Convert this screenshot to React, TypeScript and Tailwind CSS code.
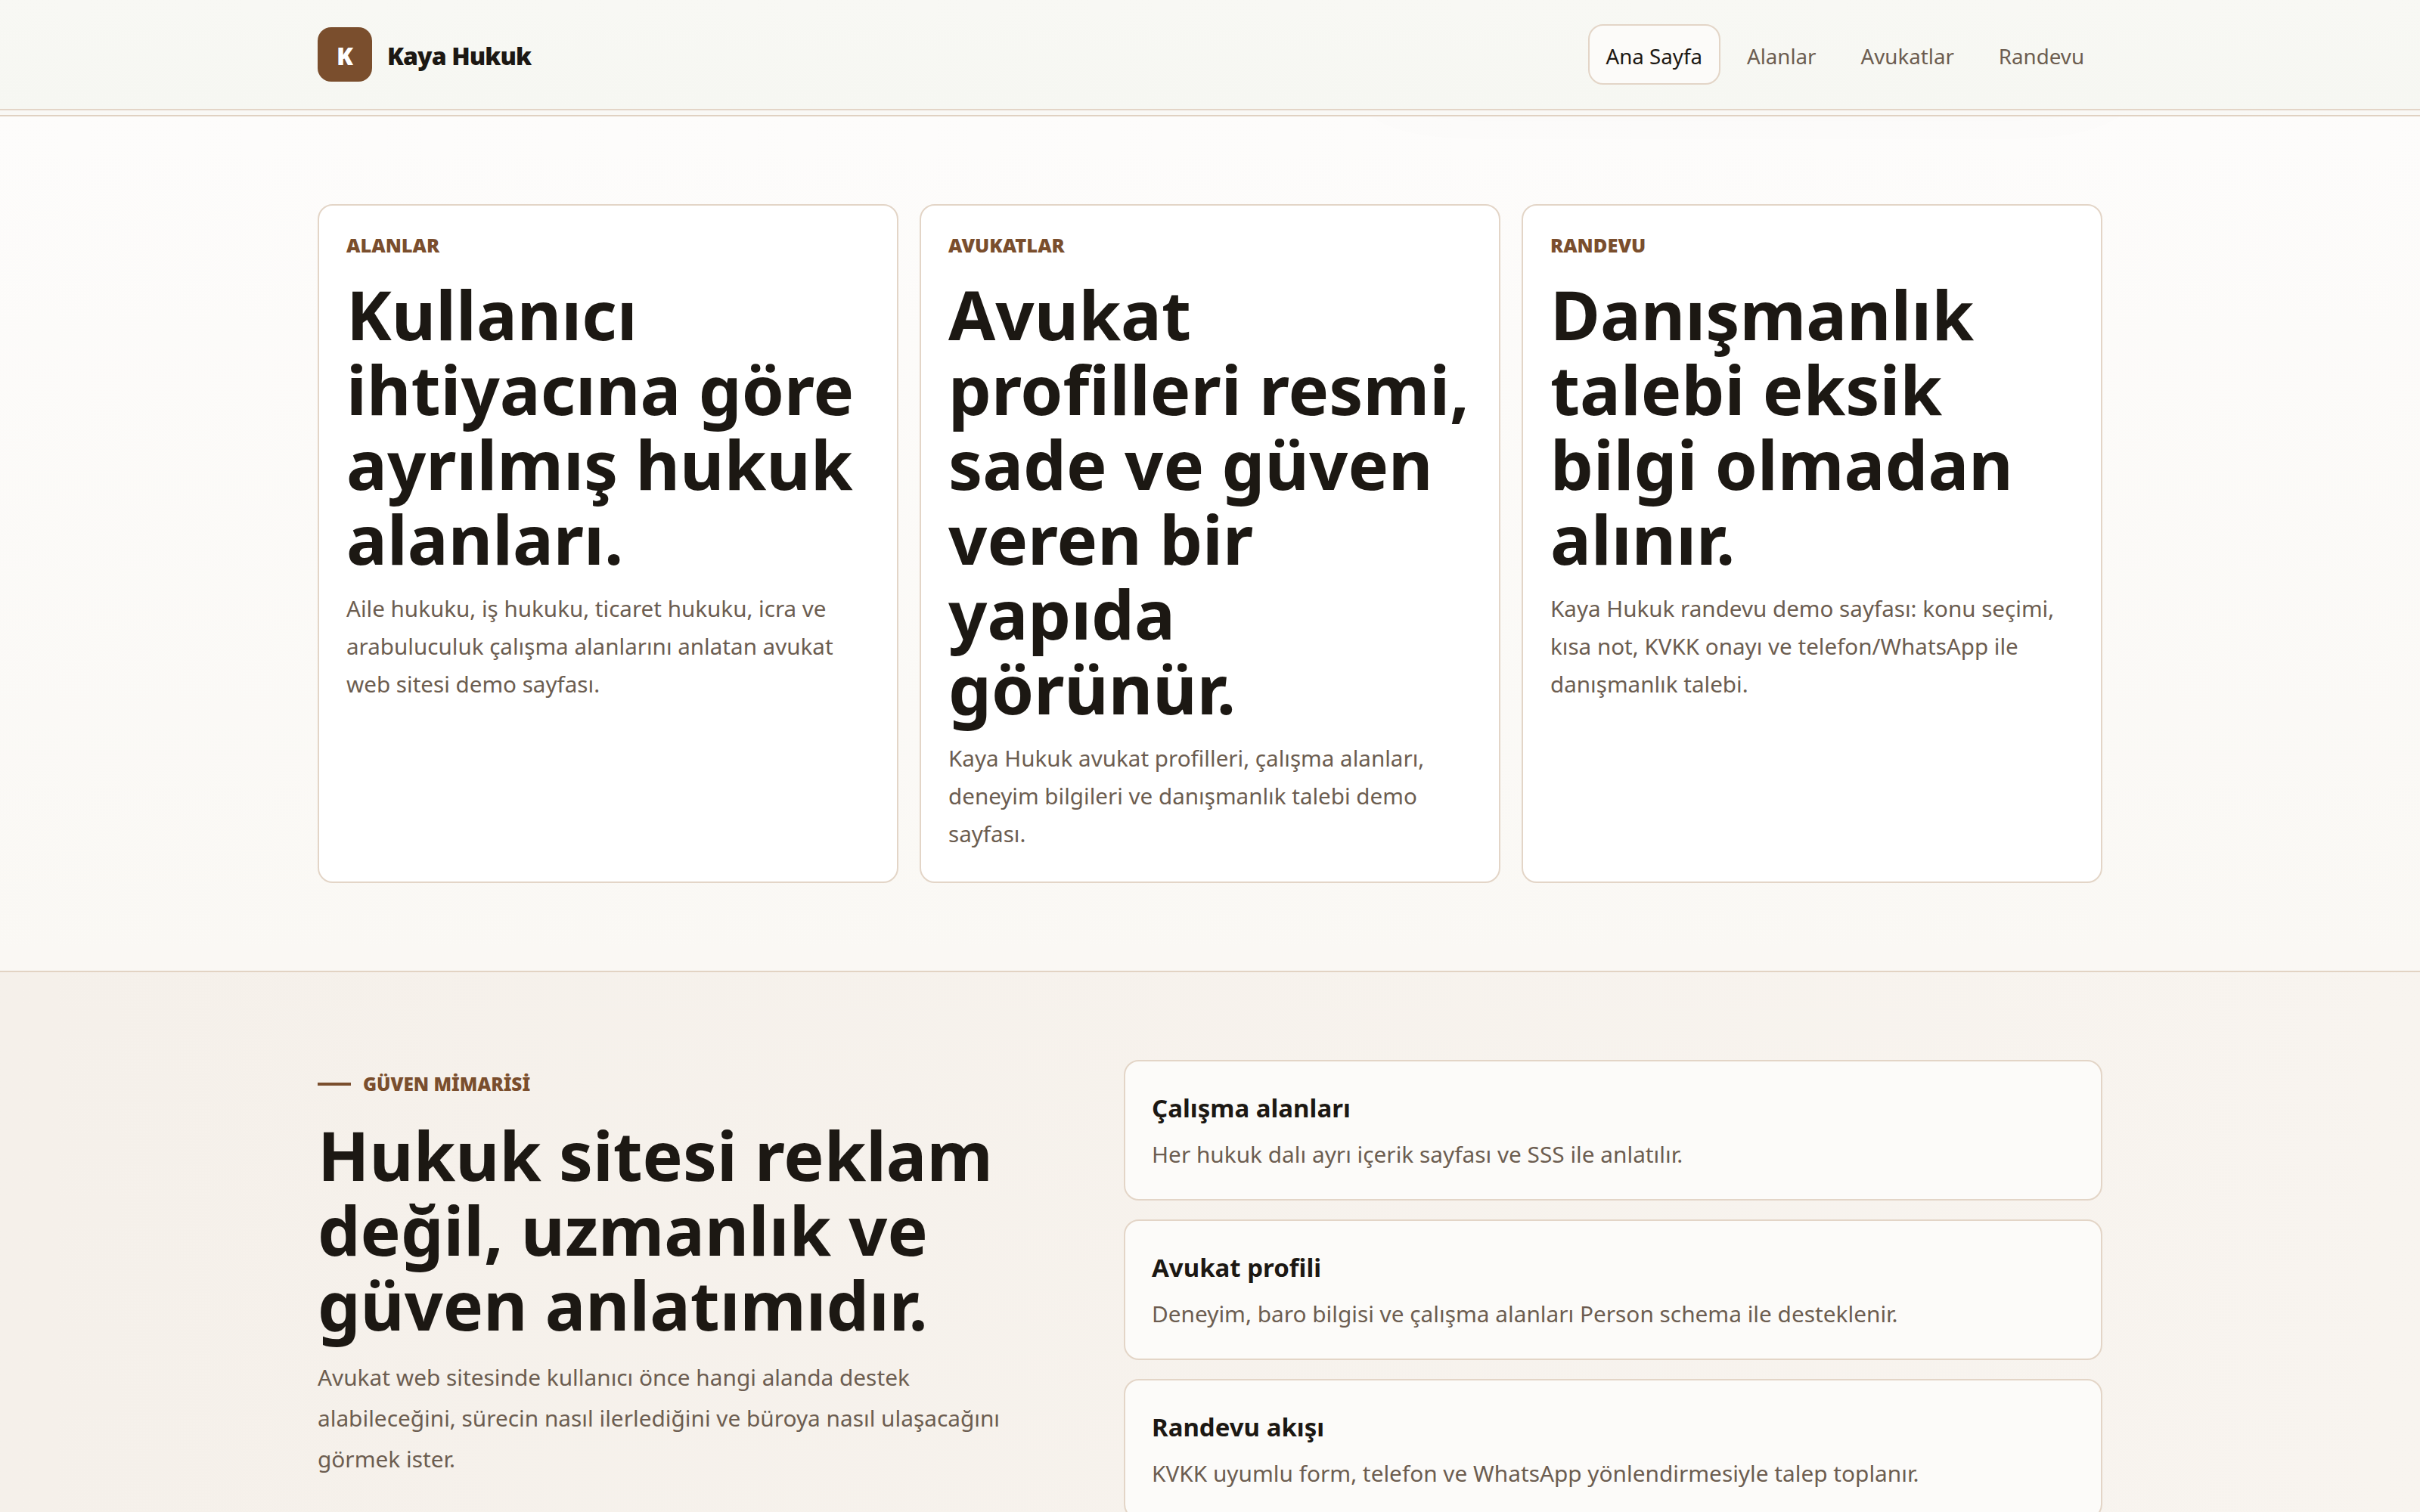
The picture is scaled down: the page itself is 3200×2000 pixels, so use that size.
const navItems = ['Alanlar', 'Avukatlar', 'Randevu'];

const heroCards = [
  {
    eyebrow: 'ALANLAR',
    title: 'Kullanıcı ihtiyacına göre ayrılmış hukuk alanları.',
    text: 'Aile hukuku, iş hukuku, ticaret hukuku, icra ve arabuluculuk çalışma alanlarını anlatan avukat web sitesi demo sayfası.',
  },
  {
    eyebrow: 'AVUKATLAR',
    title: 'Avukat profilleri resmi, sade ve güven veren bir yapıda görünür.',
    text: 'Kaya Hukuk avukat profilleri, çalışma alanları, deneyim bilgileri ve danışmanlık talebi demo sayfası.',
  },
  {
    eyebrow: 'RANDEVU',
    title: 'Danışmanlık talebi eksik bilgi olmadan alınır.',
    text: 'Kaya Hukuk randevu demo sayfası: konu seçimi, kısa not, KVKK onayı ve telefon/WhatsApp ile danışmanlık talebi.',
  },
];

const trustItems = [
  { title: 'Çalışma alanları', text: 'Her hukuk dalı ayrı içerik sayfası ve SSS ile anlatılır.' },
  { title: 'Avukat profili', text: 'Deneyim, baro bilgisi ve çalışma alanları Person schema ile desteklenir.' },
  { title: 'Randevu akışı', text: 'KVKK uyumlu form, telefon ve WhatsApp yönlendirmesiyle talep toplanır.' },
];

export default function App() {
  return (
    <div className="relative flex h-[2000px] flex-col overflow-hidden bg-[#fdfcfa] font-['Noto_Sans',sans-serif] text-[#1c1813]">
      <header className="relative z-10 h-[154px] shrink-0 border-b-2 border-[#e0d1c2] bg-[#f9f8f5]">
        <div className="h-[146px] border-b-2 border-[#e3d5c7] bg-gradient-to-b from-[#f8f8f4] to-[#f6f7f2]">
          <div className="mx-auto flex h-[144px] w-[2360px] items-center justify-between">
            <a className="flex items-center gap-5">
              <span className="flex h-[72px] w-[72px] items-center justify-center rounded-[18px] bg-[#7a4e2d] pt-[3px] text-[32px] font-black text-white">
                K
              </span>
              <span className="pt-[3px] text-[32px] font-black tracking-[-0.9px]">Kaya Hukuk</span>
            </a>
            <nav className="flex items-center gap-[11px] text-[27.7px]">
              <a className="rounded-[20px] border-2 border-[#e3d5c7] bg-[#fcfbf9] px-[22px] pt-[18px] pb-[14px] leading-[44px]">Ana Sayfa</a>
              {navItems.map((item) => (
                <a key={item} className="px-[24px] pt-[18px] pb-[14px] leading-[44px] text-[#6c5d50]">
                  {item}
                </a>
              ))}
            </nav>
          </div>
        </div>
      </header>

      <div className="pointer-events-none absolute top-[-60px] left-[1825px] h-[110px] w-[965px] shadow-[0_50px_120px_rgba(70,30,40,0.05)]" />

      <section className="shrink-0 border-b-2 border-[#e2d3c3] bg-gradient-to-b from-[#fdfcfb] to-[#faf8f4] pt-[116px] pb-[116px]">
        <div className="mx-auto grid w-[2360px] grid-cols-3 gap-[28px]">
          {heroCards.map((card) => (
            <article key={card.eyebrow} className="rounded-[20px] border-2 border-[#e3d5c7] bg-white px-[36px] pt-[34px] pb-[38px]">
              <p className="text-[25.4px] leading-[36px] font-black text-[#7a4e2d]">{card.eyebrow}</p>
              <h1 className="mt-[24px] text-[90px] leading-[99px] font-bold">{card.title}</h1>
              <p className="mt-[18px] text-[29.6px] leading-[50px] text-[#6c5d50]">{card.text}</p>
            </article>
          ))}
        </div>
      </section>

      <section className="flex-1 bg-gradient-to-r from-[#f5f0ea] to-[#f8f4ef] pt-[116px]">
        <div className="mx-auto grid w-[2360px] grid-cols-[982px_1294px] gap-[84px]">
          <div className="pt-[14px]">
            <p className="flex items-center gap-[16px] text-[24.4px] leading-[36px] font-black text-[#7a4e2d]">
              <span className="h-1 w-[44px] bg-[#7a4e2d]" />
              GÜVEN MİMARİSİ
            </p>
            <h2 className="mt-[26px] text-[89.5px] leading-[99px] font-bold">
              Hukuk sitesi reklam değil, uzmanlık ve güven anlatımıdır.
            </h2>
            <p className="mt-[20px] max-w-[930px] text-[29.8px] leading-[54px] text-[#6c5d50]">
              Avukat web sitesinde kullanıcı önce hangi alanda destek alabileceğini, sürecin nasıl ilerlediğini ve büroya nasıl ulaşacağını görmek ister.
            </p>
          </div>
          <div className="flex flex-col gap-[25px]">
            {trustItems.map((item) => (
              <div key={item.title} className="rounded-[20px] border-2 border-[#e3d5c7] bg-[#fcfbf9] p-[34px] px-[35px]">
                <h3 className="text-[33px] leading-[56px] font-bold">{item.title}</h3>
                <p className="mt-[8px] text-[29.8px] leading-[50px] text-[#6c5d50]">{item.text}</p>
              </div>
            ))}
          </div>
        </div>
      </section>
    </div>
  );
}
